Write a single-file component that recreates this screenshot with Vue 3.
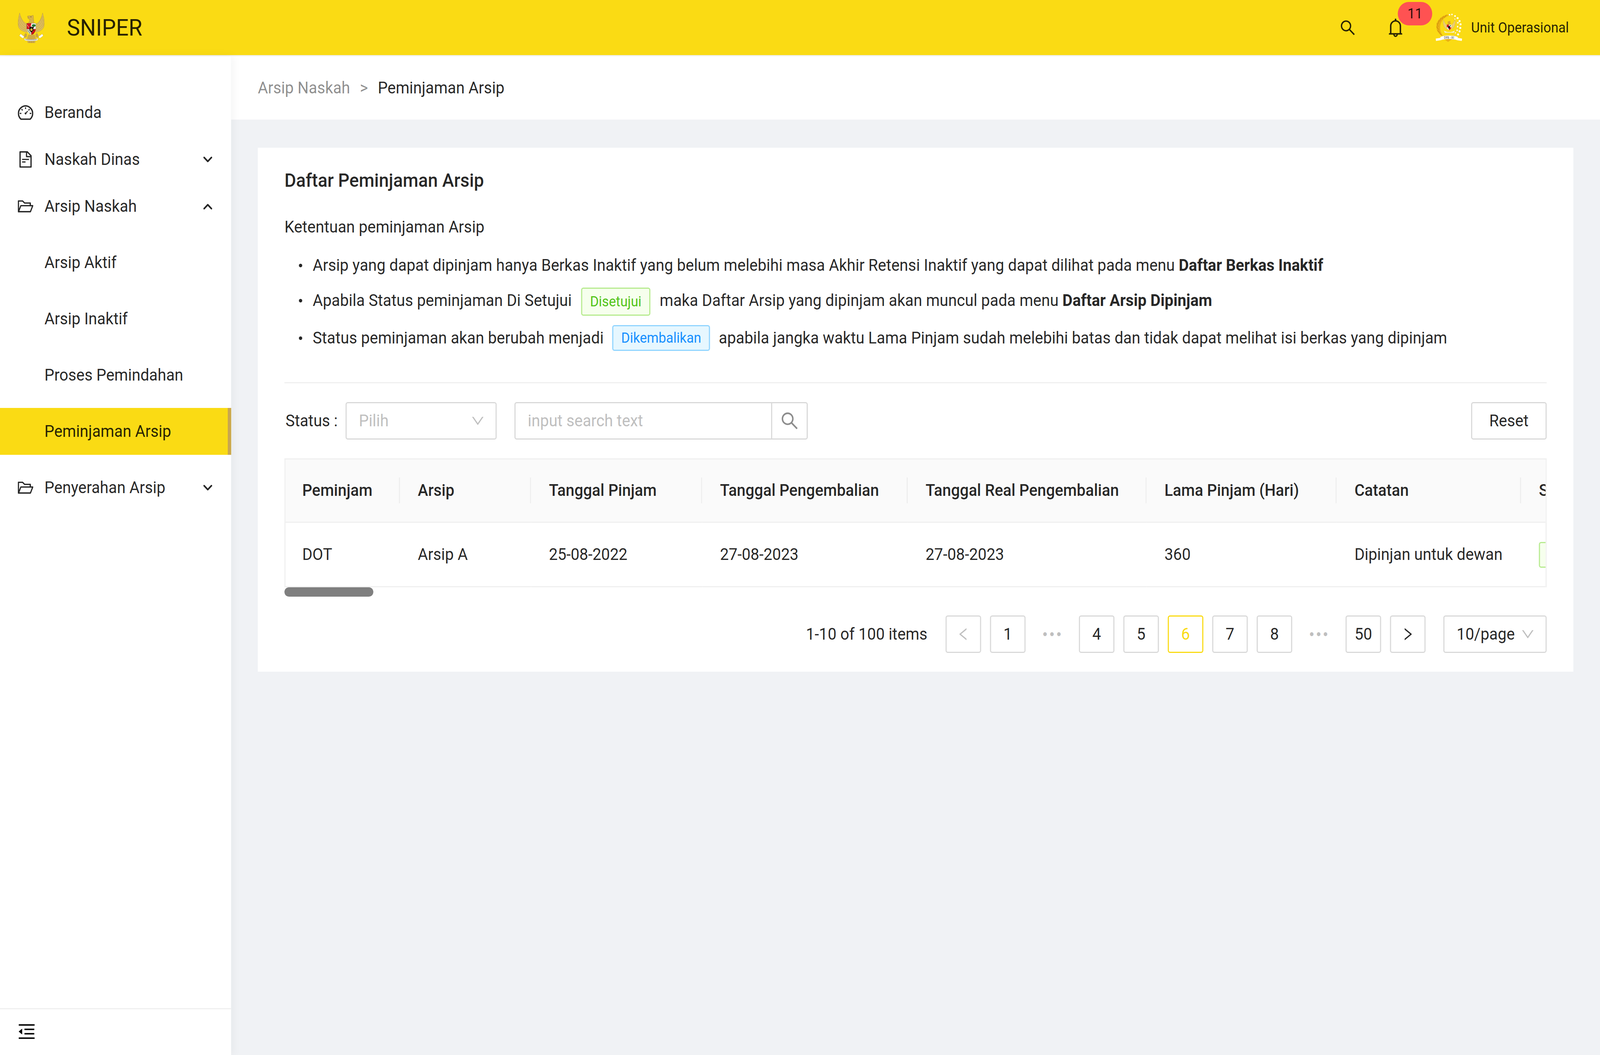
<script setup>
const fit = {
  transform: `scale(${window.innerWidth / 4320}, ${window.innerHeight / 2700})`
}

const icons = {
  dashboard: 'M924.8 385.6a446.7 446.7 0 00-96-142.4 446.7 446.7 0 00-142.4-96C631.1 123.8 572.5 112 512 112s-119.1 11.8-174.4 35.2a446.7 446.7 0 00-142.4 96 446.7 446.7 0 00-96 142.4C76.8 440.9 64 499.5 64 560c0 132.7 58.3 257.7 159.9 343.1l1.7 1.4c5.8 4.8 13.1 7.5 20.6 7.5h531.7c7.5 0 14.8-2.7 20.6-7.5l1.7-1.4C901.7 817.7 960 692.7 960 560c0-60.5-11.8-119.1-35.2-174.4zM761.4 836H262.6A371.12 371.12 0 01140 560c0-99.4 38.7-192.8 109-263 70.3-70.3 163.7-109 263-109 99.4 0 192.8 38.7 263 109 70.3 70.3 109 163.7 109 263 0 105.6-44.5 205.5-122.6 276zM623.5 421.5a8.03 8.03 0 00-11.3 0L527.7 506c-18.7-5-39.4-.2-54.1 14.5a55.95 55.95 0 000 79.2 55.95 55.95 0 0079.2 0 55.87 55.87 0 0014.5-54.1l84.5-84.5c3.1-3.1 3.1-8.2 0-11.3l-28.3-28.3zM490 320h44c4.4 0 8-3.6 8-8v-80c0-4.4-3.6-8-8-8h-44c-4.4 0-8 3.6-8 8v80c0 4.4 3.6 8 8 8zM750 538v44c0 4.4 3.6 8 8 8h80c4.4 0 8-3.6 8-8v-44c0-4.4-3.6-8-8-8h-80c-4.4 0-8 3.6-8 8zM762.7 340.8l-31.1-31.1a8.03 8.03 0 00-11.3 0l-56.6 56.6a8.03 8.03 0 000 11.3l31.1 31.1c3.1 3.1 8.2 3.1 11.3 0l56.6-56.6c3.1-3.1 3.1-8.2 0-11.3zM304.1 309.7a8.03 8.03 0 00-11.3 0l-31.1 31.1a8.03 8.03 0 000 11.3l56.6 56.6c3.1 3.1 8.2 3.1 11.3 0l31.1-31.1c3.1-3.1 3.1-8.2 0-11.3l-56.6-56.6zM262 530h-80c-4.4 0-8 3.6-8 8v44c0 4.4 3.6 8 8 8h80c4.4 0 8-3.6 8-8v-44c0-4.4-3.6-8-8-8z',
  file: 'M854.6 288.6L639.4 73.4c-6-6-14.1-9.4-22.6-9.4H192c-17.7 0-32 14.3-32 32v832c0 17.7 14.3 32 32 32h640c17.7 0 32-14.3 32-32V311.3c0-8.5-3.4-16.7-9.4-22.7zM790.2 326H602V137.8L790.2 326zm1.8 562H232V136h302v216a42 42 0 0042 42h216v494zM504 618H320c-4.4 0-8 3.6-8 8v48c0 4.4 3.6 8 8 8h184c4.4 0 8-3.6 8-8v-48c0-4.4-3.6-8-8-8zM312 490v48c0 4.4 3.6 8 8 8h384c4.4 0 8-3.6 8-8v-48c0-4.4-3.6-8-8-8H320c-4.4 0-8 3.6-8 8z',
  folder: 'M928 444H820V330.4c0-17.7-14.3-32-32-32H473L355.7 186.2a8.15 8.15 0 00-5.5-2.2H96c-17.7 0-32 14.3-32 32v592c0 17.7 14.3 32 32 32h698c13 0 24.8-7.9 29.7-20l134-332c1.5-3.8 2.3-7.9 2.3-12 0-17.7-14.3-32-32-32zM136 256h188.5l119.6 114.4H748V444H238c-13 0-24.8 7.9-29.7 20L136 643.2V256zm635.3 512H159l103.3-256h612.4L771.3 768z',
  search: 'M909.6 854.5L649.9 594.8C690.2 542.7 712 479 712 412c0-80.2-31.3-155.4-87.9-212.1-56.6-56.7-132-87.9-212.1-87.9s-155.5 31.3-212.1 87.9C143.2 256.5 112 331.8 112 412c0 80.1 31.3 155.5 87.9 212.1C256.5 680.8 331.8 712 412 712c67 0 130.6-21.8 182.7-62l259.7 259.6a8.2 8.2 0 0011.6 0l43.6-43.5a8.2 8.2 0 000-11.6zM570.4 570.4C528 612.7 471.8 636 412 636s-116-23.3-158.4-65.6C211.3 528 188 471.8 188 412s23.3-116.1 65.6-158.4C296 211.3 352.2 188 412 188s116.1 23.2 158.4 65.6S636 352.2 636 412s-23.3 116.1-65.6 158.4z',
  bell: 'M816 768h-24V428c0-141.1-104.3-257.7-240-277.1V112c0-22.1-17.9-40-40-40s-40 17.9-40 40v38.9c-135.7 19.4-240 136-240 277.1v340h-24c-17.7 0-32 14.3-32 32v32c0 4.4 3.6 8 8 8h216c0 61.8 50.2 112 112 112s112-50.2 112-112h216c4.4 0 8-3.6 8-8v-32c0-17.7-14.3-32-32-32zM512 888c-26.5 0-48-21.5-48-48h96c0 26.5-21.5 48-48 48zM304 768V428c0-55.6 21.6-107.8 60.9-147.1S456.4 220 512 220c55.6 0 107.8 21.6 147.1 60.9S720 372.4 720 428v340H304z',
  down: 'M884 256h-75c-5.1 0-9.9 2.5-12.9 6.6L512 654.2 227.9 262.6c-3-4.1-7.8-6.6-12.9-6.6h-75c-6.5 0-10.3 7.4-6.5 12.7l352.6 486.1c12.8 17.6 39 17.6 51.7 0l352.6-486.1c3.9-5.3.1-12.7-6.4-12.7z',
  left: 'M724 218.3V141c0-6.7-7.7-10.4-12.9-6.3L260.3 486.8a31.86 31.86 0 000 50.3l450.8 352.1c5.3 4.1 12.9.4 12.9-6.3v-77.3c0-4.9-2.3-9.6-6.1-12.6l-360-281 360-281.1c3.8-3 6.1-7.7 6.1-12.6z',
  right: 'M765.7 486.8L314.9 134.7A7.97 7.97 0 00302 141v77.3c0 4.9 2.3 9.6 6.1 12.6l360 281.1-360 281.1c-3.8 3-6.1 7.7-6.1 12.6V883c0 6.7 7.7 10.4 12.9 6.3l450.8-352.1a31.96 31.96 0 000-50.4z',
  fold: 'M408 442h480c4.4 0 8-3.6 8-8v-56c0-4.4-3.6-8-8-8H408c-4.4 0-8 3.6-8 8v56c0 4.4 3.6 8 8 8zm-8 204c0 4.4 3.6 8 8 8h480c4.4 0 8-3.6 8-8v-56c0-4.4-3.6-8-8-8H408c-4.4 0-8 3.6-8 8v56zm504-486H120c-4.4 0-8 3.6-8 8v56c0 4.4 3.6 8 8 8h784c4.4 0 8-3.6 8-8v-56c0-4.4-3.6-8-8-8zm0 632H120c-4.4 0-8 3.6-8 8v56c0 4.4 3.6 8 8 8h784c4.4 0 8-3.6 8-8v-56c0-4.4-3.6-8-8-8zM115.4 518.9L271.7 642c5.8 4.6 14.4.5 14.4-6.9V388.9c0-7.3-8.5-11.4-14.4-6.9L115.4 505.1a8.74 8.74 0 000 13.8z'
}

const menu = [
  { label: 'Beranda', icon: 'dashboard' },
  { label: 'Naskah Dinas', icon: 'file', arrow: 'down' },
  { label: 'Arsip Naskah', icon: 'folder', arrow: 'up' },
  { label: 'Arsip Aktif', sub: true },
  { label: 'Arsip Inaktif', sub: true },
  { label: 'Proses Pemindahan', sub: true },
  { label: 'Peminjaman Arsip', sub: true, active: true },
  { label: 'Penyerahan Arsip', icon: 'folder', arrow: 'down', after: true }
]

const columns = [
  { title: 'Peminjam', width: 103, value: 'DOT' },
  { title: 'Arsip', width: 118, value: 'Arsip A' },
  { title: 'Tanggal Pinjam', width: 154, value: '25-08-2022' },
  { title: 'Tanggal Pengembalian', width: 185, value: '27-08-2023' },
  { title: 'Tanggal Real Pengembalian', width: 215, value: '27-08-2023' },
  { title: 'Lama Pinjam (Hari)', width: 171, value: '360' },
  { title: 'Catatan', width: 166, value: 'Dipinjan untuk dewan' },
  { title: 'Status', width: 120, tag: 'Disetujui' }
]

const pages = [
  { kind: 'prev' },
  { label: '1' },
  { kind: 'dots' },
  { label: '4' },
  { label: '5' },
  { label: '6', active: true },
  { label: '7' },
  { label: '8' },
  { kind: 'dots' },
  { label: '50' },
  { kind: 'next' }
]
</script>

<template>
  <div class="stage">
    <div class="app" :style="fit">
      <header class="topbar">
        <svg class="garuda" viewBox="143 97 217 235" aria-hidden="true">
          <g fill="none" stroke-linejoin="round">
            <path d="M158 100C150 130 143 165 146 195C149 225 178 245 220 250L222 188C192 176 170 150 158 100Z" fill="#dcbc5e" stroke="#b8983c" stroke-width="2" />
            <path d="M345 100C335 150 315 176 286 188L288 250C325 245 355 225 358 195C361 165 354 130 345 100Z" fill="#dcbc5e" stroke="#b8983c" stroke-width="2" />
            <path d="M157 125C158 165 180 200 220 214M150 150C154 190 180 218 220 226M147 180C155 212 185 232 220 238M165 125C172 160 190 185 220 200M347 125C346 165 324 200 288 214M354 150C350 190 324 218 288 226M356 180C349 212 319 232 288 238M339 125C332 160 314 185 288 200" stroke="#bd9d42" stroke-width="2.5" />
          </g>
          <path d="M205 255C195 268 190 280 198 292L215 286L218 262ZM300 255C310 268 315 280 307 292L290 286L287 262Z" fill="#c9a544" />
          <path d="M222 125C232 120 255 126 268 118C272 135 270 150 276 182H228C232 170 242 160 242 148C234 151 224 147 222 125Z" fill="#d8b24a" stroke="#a98a30" stroke-width="2" />
          <path d="M222 132L238 130L240 138L228 142Z" fill="#c9a03a" />
          <circle cx="250" cy="131" r="3" fill="#4a3a10" />
          <path d="M228 268H282L290 298L284 332H224L218 298Z" fill="#d0aa42" />
          <path d="M240 300V330M254 300V332M268 300V330" stroke="#a98a30" stroke-width="3" />
          <rect x="216" y="180" width="37" height="45" fill="#d8141c" />
          <rect x="253" y="180" width="37" height="45" fill="#fff" />
          <path d="M216 225H253V270C235 262 222 250 216 225Z" fill="#d9dcc8" />
          <path d="M253 225H290C285 250 270 262 253 270Z" fill="#d8141c" />
          <rect x="216" y="180" width="74" height="45" fill="none" stroke="#555" stroke-width="1.5" />
          <ellipse cx="273" cy="197" rx="15" ry="10" fill="#1f7a35" />
          <rect x="270" y="203" width="5" height="13" fill="#4d3a1c" />
          <path d="M222 192C222 205 235 212 240 212C246 212 250 205 250 192" fill="none" stroke="#fff" stroke-width="3" />
          <ellipse cx="268" cy="248" rx="9" ry="18" transform="rotate(30 268 248)" fill="none" stroke="#8a0d12" stroke-width="4" />
          <path d="M224 232L244 260" stroke="#5c7a55" stroke-width="6" stroke-dasharray="4 2" />
          <path d="M238 208H270V232C268 242 260 248 254 250C248 248 240 242 238 232Z" fill="#111" />
          <path d="M254 212L258 224L270 224L260 231L264 243L254 236L244 243L248 231L238 224L250 224Z" fill="#e8c23e" />
          <path d="M166 262L196 284L184 296L172 288L156 276ZM342 262L312 284L322 296L334 288L350 276Z" fill="#fff" stroke="#9a9a8a" stroke-width="1.5" />
          <path d="M195 295C215 308 290 308 308 295L304 312C280 318 225 318 200 312Z" fill="#eef0ea" stroke="#aaa" stroke-width="1" />
          <path d="M205 304C230 310 275 310 298 304" fill="none" stroke="#666" stroke-width="4" stroke-dasharray="5 3" />
        </svg>
        <span class="brand">SNIPER</span>
        <div class="top-actions">
          <svg class="icon-search" viewBox="64 64 896 896" aria-hidden="true"><path :d="icons.search" /></svg>
          <div class="bell-wrap">
            <svg class="icon-bell" viewBox="64 64 896 896" aria-hidden="true"><path :d="icons.bell" /></svg>
            <span class="badge">11</span>
          </div>
          <svg class="dpr" viewBox="108 78 214 217" aria-hidden="true">
            <path d="M210 84C152 92 110 135 113 182C115 214 135 238 168 252C150 226 143 205 144 182C146 140 172 108 214 94Z" fill="#ebb016" />
            <path d="M196 86L176 108M172 96L158 122M152 110L140 138M134 128L128 158M118 150L128 180M115 178L132 202M122 206L142 226M140 230L158 246" stroke="#c98e08" stroke-width="4" fill="none" />
            <path d="M225 92C258 105 288 145 283 190C281 215 270 235 250 250" fill="none" stroke="#eec75c" stroke-width="4" />
            <g fill="#fff">
              <circle cx="220" cy="86" r="6" /><circle cx="240" cy="84" r="6" /><circle cx="265" cy="96" r="7" />
              <circle cx="286" cy="112" r="8" /><circle cx="302" cy="135" r="8" /><circle cx="310" cy="160" r="8" />
              <circle cx="308" cy="188" r="8" /><circle cx="302" cy="214" r="8" /><circle cx="290" cy="238" r="8" />
              <circle cx="268" cy="226" r="5" /><circle cx="288" cy="148" r="6" /><circle cx="286" cy="178" r="6" />
              <circle cx="282" cy="206" r="6" /><circle cx="264" cy="120" r="4" />
            </g>
            <path d="M172 124C162 150 170 188 202 198L202 165C188 160 178 148 172 124Z" fill="#ebcd74" stroke="#d2ab46" stroke-width="1.5" />
            <path d="M262 124C272 150 264 188 232 198L232 165C246 160 256 148 262 124Z" fill="#ebcd74" stroke="#d2ab46" stroke-width="1.5" />
            <path d="M205 138L226 134L230 164H200C206 155 208 150 205 138Z" fill="#d9a92e" />
            <rect x="198" y="163" width="18" height="20" fill="#d8141c" /><rect x="216" y="163" width="18" height="20" fill="#fff" />
            <path d="M198 183H216V206C206 202 200 195 198 183Z" fill="#e8e8d8" /><path d="M216 183H234C232 195 226 202 216 206Z" fill="#d8141c" />
            <circle cx="226" cy="171" r="5" fill="#1f7a35" />
            <path d="M209 174H224V188L216 195L209 188Z" fill="#111" />
            <path d="M175 208C195 224 240 224 262 208L256 224H182Z" fill="#f2f2ee" />
            <path d="M172 272L208 296L246 272Z" fill="#ebb016" />
            <path d="M108 270L150 264L152 282L110 288ZM322 270L280 264L278 282L320 288Z" fill="#fff" />
            <path d="M145 258C175 244 255 244 288 258L284 282C250 270 180 270 150 282Z" fill="#fff" stroke="#ddd" stroke-width="1" />
            <text x="216" y="270" text-anchor="middle" class="dpr-text">DPR - RI</text>
          </svg>
          <span class="unit">Unit Operasional</span>
        </div>
      </header>

      <div class="body">
        <aside class="sidebar">
          <nav class="nav">
            <div
              v-for="item in menu"
              :key="item.label"
              class="nav-item"
              :class="{ 'is-sub': item.sub, 'is-active': item.active, 'is-after': item.after }"
            >
              <svg v-if="item.icon" class="nav-icon" viewBox="64 64 896 896" aria-hidden="true"><path :d="icons[item.icon]" /></svg>
              <span class="nav-label">{{ item.label }}</span>
              <svg v-if="item.arrow" class="nav-arrow" viewBox="0 0 8 5" aria-hidden="true">
                <polyline :points="item.arrow === 'down' ? '0.7,0.7 4,4 7.3,0.7' : '0.7,4.3 4,1 7.3,4.3'" />
              </svg>
            </div>
          </nav>
          <div class="collapse">
            <svg class="fold" viewBox="64 64 896 896" aria-hidden="true"><path :d="icons.fold" /></svg>
          </div>
        </aside>

        <main class="main">
          <div class="crumbs">
            <span class="crumb-muted">Arsip Naskah</span>
            <span class="crumb-sep">&gt;</span>
            <span>Peminjaman Arsip</span>
          </div>

          <div class="content">
            <section class="card">
              <h1 class="title">Daftar Peminjaman Arsip</h1>
              <p class="lead">Ketentuan peminjaman Arsip</p>
              <ul class="rules">
                <li>
                  <span>Arsip yang dapat dipinjam hanya Berkas Inaktif yang belum melebihi masa Akhir Retensi Inaktif yang dapat dilihat pada menu <strong>Daftar Berkas Inaktif</strong></span>
                </li>
                <li>
                  <span>Apabila Status peminjaman Di Setujui</span>
                  <span class="tag tag-green tag-tall">Disetujui</span>
                  <span>maka Daftar Arsip yang dipinjam akan muncul pada menu <strong>Daftar Arsip Dipinjam</strong></span>
                </li>
                <li>
                  <span>Status peminjaman akan berubah menjadi</span>
                  <span class="tag tag-blue">Dikembalikan</span>
                  <span>apabila jangka waktu Lama Pinjam sudah melebihi batas dan tidak dapat melihat isi berkas yang dipinjam</span>
                </li>
              </ul>

              <div class="filters">
                <span class="filter-label">Status :</span>
                <div class="select select-status">
                  <span class="placeholder">Pilih</span>
                  <svg class="chev" viewBox="64 64 896 896" aria-hidden="true"><path :d="icons.down" /></svg>
                </div>
                <div class="search">
                  <span class="search-input placeholder">input search text</span>
                  <span class="search-btn">
                    <svg viewBox="64 64 896 896" aria-hidden="true"><path :d="icons.search" /></svg>
                  </span>
                </div>
                <button class="reset" type="button">Reset</button>
              </div>

              <div class="table-wrap">
                <table class="table">
                  <colgroup>
                    <col v-for="c in columns" :key="c.title" :style="{ width: c.width + 'px' }" />
                  </colgroup>
                  <thead>
                    <tr><th v-for="c in columns" :key="c.title">{{ c.title }}</th></tr>
                  </thead>
                  <tbody>
                    <tr>
                      <td v-for="c in columns" :key="c.title">
                        <span v-if="c.tag" class="tag tag-green tag-cell">{{ c.tag }}</span>
                        <template v-else>{{ c.value }}</template>
                      </td>
                    </tr>
                  </tbody>
                </table>
              </div>
              <div class="scrollbar"></div>

              <div class="pager">
                <span class="total">1-10 of 100 items</span>
                <template v-for="(p, i) in pages" :key="i">
                  <span v-if="p.kind === 'dots'" class="page-dots">•••</span>
                  <span v-else class="page" :class="{ 'page-active': p.active, 'page-off': p.kind === 'prev' }">
                    <svg v-if="p.kind" viewBox="64 64 896 896" aria-hidden="true"><path :d="p.kind === 'prev' ? icons.left : icons.right" /></svg>
                    <template v-else>{{ p.label }}</template>
                  </span>
                </template>
                <div class="select select-size">
                  <span>10/page</span>
                  <svg class="chev" viewBox="64 64 896 896" aria-hidden="true"><path :d="icons.down" /></svg>
                </div>
              </div>
            </section>
          </div>
        </main>
      </div>
    </div>
  </div>
</template>

<style>
html, body { margin: 0; padding: 0; background: #f0f2f5; }
</style>

<style scoped>
.stage { width: 100vw; height: 100vh; overflow: hidden; }
.app {
  zoom: 3;
  transform-origin: 0 0;
  width: 1440px;
  height: 900px;
  display: flex;
  flex-direction: column;
  overflow: hidden;
  background: #f0f2f5;
  color: rgba(0, 0, 0, 0.85);
  font-family: Roboto, "Liberation Sans", sans-serif;
  font-size: 14px;
  line-height: 22px;
}
.topbar {
  box-sizing: border-box;
  flex: none;
  height: 48px;
  display: flex;
  align-items: center;
  padding: 0 28px 0 16px;
  background: #fadb14;
  border-bottom: 1px solid #f0f0f0;
}
.garuda { width: 24px; height: 26px; flex: none; }
.brand { margin-left: 20.2px; font-size: 20px; line-height: 28px; }
.top-actions { margin-left: auto; display: flex; align-items: center; }
.icon-search { width: 14px; height: 14px; fill: rgba(0, 0, 0, 0.85); }
.bell-wrap { position: relative; margin-left: 28px; width: 16px; height: 16px; }
.icon-bell { display: block; width: 16px; height: 16px; fill: rgba(0, 0, 0, 0.85); }
.badge {
  position: absolute;
  left: 10px;
  top: -14px;
  width: 31px;
  height: 20px;
  border-radius: 10px;
  background: #ff5252;
  color: rgba(0, 0, 0, 0.85);
  font-size: 12px;
  line-height: 20px;
  text-align: center;
}
.dpr { width: 24px; height: 24px; margin-left: 28px; flex: none; }
.dpr-text { font-family: "Liberation Serif", serif; font-size: 22px; fill: #333; }
.unit { margin-left: 8px; font-size: 12px; line-height: 20px; }

.body { flex: 1; min-height: 0; display: flex; }
.sidebar {
  position: relative;
  z-index: 1;
  flex: none;
  width: 208px;
  display: flex;
  flex-direction: column;
  background: #fff;
  box-shadow: 2px 0 8px rgba(29, 35, 41, 0.05);
}
.nav { flex: 1; padding-top: 28px; }
.nav-item { height: 40px; display: flex; align-items: center; padding: 0 17px 0 16px; }
.nav-item.is-sub { margin-top: 8px; padding-left: 40px; }
.nav-item.is-after { margin-top: 8px; }
.nav-item.is-active { background: #fadb14; border-right: 3px solid #c9a64f; }
.nav-icon { width: 14px; height: 14px; margin-right: 10px; flex: none; fill: rgba(0, 0, 0, 0.85); }
.nav-arrow {
  width: 8px;
  height: 5px;
  margin-left: auto;
  fill: none;
  stroke: rgba(0, 0, 0, 0.85);
  stroke-width: 1.4;
  stroke-linecap: round;
  stroke-linejoin: round;
}
.collapse {
  box-sizing: border-box;
  height: 40px;
  padding: 11px 16px 0;
  border-top: 1px solid #f0f0f0;
}
.fold { display: block; width: 16px; height: 16px; fill: #000; }

.main { flex: 1; min-width: 0; display: flex; flex-direction: column; }
.crumbs {
  flex: none;
  height: 54px;
  display: flex;
  align-items: center;
  padding-left: 24px;
  background: #fff;
}
.crumb-muted { color: rgba(0, 0, 0, 0.45); }
.crumb-sep { margin: 0 8.8px; color: rgba(0, 0, 0, 0.45); }
.content { padding: 24px; }
.card { background: #fff; padding: 16px 24px; }
.title { margin: 0; font-size: 16px; line-height: 24px; font-weight: 500; }
.lead { margin: 16.8px 0 0; }
.rules { list-style: none; margin: 10.6px 0 0; padding: 0 0 0 13px; }
.rules li { display: flex; align-items: flex-start; margin-bottom: 8px; }
.rules li:last-child { margin-bottom: 0; }
.rules li::before {
  content: "";
  flex: none;
  width: 3px;
  height: 3px;
  margin: 9.5px 9.4px 0 0;
  border-radius: 50%;
  background: rgba(0, 0, 0, 0.85);
}
.rules strong { font-weight: 700; }
.tag {
  box-sizing: border-box;
  display: inline-block;
  height: 22px;
  padding: 0 7px;
  border: 1px solid;
  border-radius: 2px;
  font-size: 12px;
  line-height: 20px;
  white-space: nowrap;
}
.rules .tag { margin: 0 8.4px; }
.rules .tag-blue { margin: 0 7.8px; }
.tag-tall { height: 24px; line-height: 22px; }
.tag-green { color: #52c41a; background: #f6ffed; border-color: #b7eb8f; }
.tag-blue { color: #1890ff; background: #e6f7ff; border-color: #91d5ff; }

.filters {
  display: flex;
  align-items: center;
  height: 32px;
  margin-top: 26.6px;
  padding-top: 16px;
  border-top: 1px solid #f0f0f0;
  box-sizing: content-box;
}
.filter-label { width: 55px; flex: none; padding-left: 1px; box-sizing: border-box; }
.select {
  box-sizing: border-box;
  height: 32px;
  display: flex;
  align-items: center;
  justify-content: space-between;
  padding: 0 10px 0 11px;
  border: 1px solid #d9d9d9;
  border-radius: 2px;
  background: #fff;
}
.select-status { width: 136px; }
.placeholder { color: #bfbfbf; }
.chev { width: 12px; height: 12px; fill: rgba(0, 0, 0, 0.25); flex: none; }
.search {
  box-sizing: border-box;
  margin-left: 16px;
  width: 264px;
  height: 32px;
  display: flex;
  border: 1px solid #d9d9d9;
  border-radius: 2px;
}
.search-input { flex: 1; padding-left: 11px; line-height: 30px; }
.search-btn {
  box-sizing: border-box;
  width: 32px;
  display: flex;
  align-items: center;
  justify-content: center;
  border-left: 1px solid #d9d9d9;
}
.search-btn svg { width: 16px; height: 16px; fill: rgba(0, 0, 0, 0.45); }
.reset {
  box-sizing: border-box;
  margin-left: auto;
  width: 68px;
  height: 32px;
  padding: 0;
  border: 1px solid #d9d9d9;
  border-radius: 2px;
  background: #fff;
  color: rgba(0, 0, 0, 0.85);
  font: inherit;
}
.table-wrap {
  margin-top: 16px;
  overflow: hidden;
  border: 1px solid #f0f0f0;
  border-bottom: 0;
}
.table { table-layout: fixed; width: 1232px; border-collapse: separate; border-spacing: 0; }
.table th, .table td {
  box-sizing: border-box;
  padding: 0 16px;
  border-bottom: 1px solid #f0f0f0;
  text-align: left;
  white-space: nowrap;
  overflow: hidden;
}
.table th {
  height: 54px;
  font-weight: 500;
  background-color: #fafafa;
  background-image: linear-gradient(#eeeeee, #eeeeee);
  background-size: 1px 22px;
  background-position: right center;
  background-repeat: no-repeat;
}
.table th:last-child { background-image: none; }
.table td { height: 55px; }
.table th:first-child, .table td:first-child { padding-left: 15px; }
.tag-cell { vertical-align: middle; }
.scrollbar { width: 80px; height: 8px; border-radius: 4px; background: #7f7f7f; }
.pager { display: flex; align-items: center; justify-content: flex-end; margin-top: 16px; }
.total { margin-right: 16.4px; }
.page, .page-dots {
  box-sizing: border-box;
  width: 32px;
  height: 32px;
  margin-right: 8px;
  display: flex;
  align-items: center;
  justify-content: center;
}
.page { border: 1px solid #d9d9d9; border-radius: 2px; background: #fff; }
.page svg { width: 12px; height: 12px; fill: rgba(0, 0, 0, 0.85); }
.page-off svg { fill: rgba(0, 0, 0, 0.25); }
.page-active { border-color: #fadb14; color: #fadb14; }
.page-dots { color: rgba(0, 0, 0, 0.25); font-family: "Liberation Sans", sans-serif; font-size: 12px; letter-spacing: 2px; text-indent: 1.5px; }
.select-size { width: 93px; margin-left: 8px; }
</style>
